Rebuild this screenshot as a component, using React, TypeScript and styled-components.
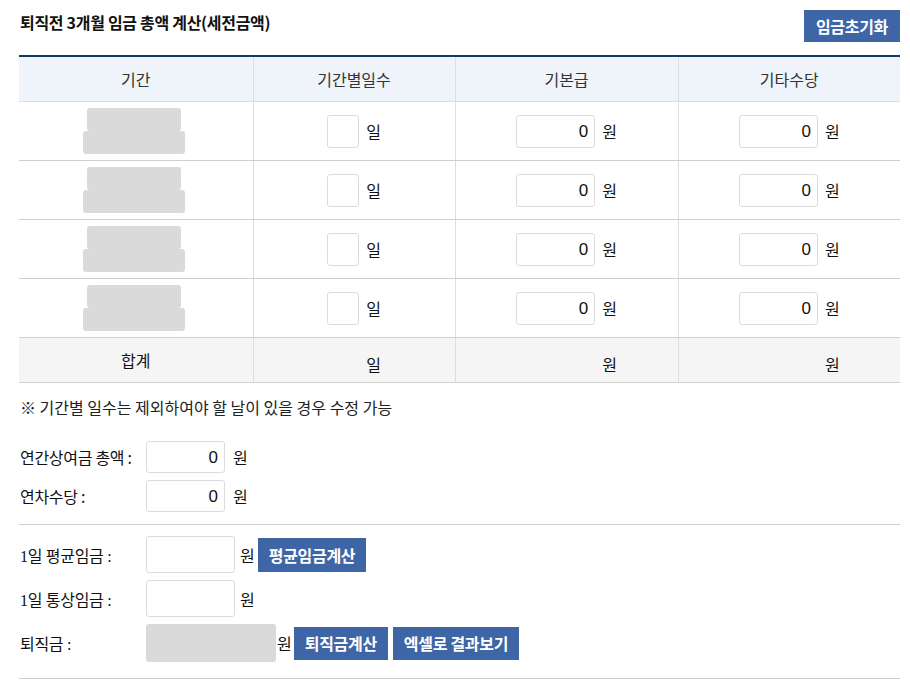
import styled, { createGlobalStyle } from 'styled-components';

const GlobalStyle = createGlobalStyle`
  body {
    margin: 0;
    background: #fff;
    font-family: "Noto Sans CJK KR", "Noto Sans", sans-serif;
    color: #222;
  }
`;

const Colors = {
  navy: '#0f3b66',
  button: '#3e66a6',
  headBg: '#eff3fa',
  totalBg: '#f5f5f5',
  line: '#cfcfcf',
  cellLine: '#dedede',
  inputLine: '#dcdcdc',
  block: '#dadada',
};

const Page = styled.div`
  width: 881px;
  padding: 0 10px 0 19px;
`;

const TitleBar = styled.div`
  height: 55px;
  display: flex;
  align-items: flex-start;
  justify-content: space-between;

  h2 {
    margin: 10px 0 0 1px;
    font-size: 16px;
    font-weight: bold;
    letter-spacing: -0.3px;
    color: #111;
  }
`;

const BlueButton = styled.button<{ $h?: number }>`
  height: ${(p) => p.$h || 34}px;
  padding: 0 11px;
  border: 0;
  background: ${Colors.button};
  color: #fff;
  font-family: "Noto Sans CJK KR", sans-serif;
  font-size: 16px;
  font-weight: bold;
  letter-spacing: -0.3px;
  cursor: pointer;
`;

const ResetButton = styled(BlueButton)`
  margin-top: 10px;
  height: 32px;
  width: 96px;
  padding: 0;
`;

const WageTable = styled.table`
  width: 881px;
  border-collapse: collapse;
  table-layout: fixed;
  border-top: 2px solid ${Colors.navy};
  font-size: 16px;

  th {
    height: 42px;
    background: ${Colors.headBg};
    font-weight: normal;
    color: #333;
    border-left: 1px solid ${Colors.cellLine};
    border-bottom: 1px solid ${Colors.cellLine};
  }
  td {
    height: 58px;
    text-align: center;
    border-left: 1px solid ${Colors.cellLine};
    border-bottom: 1px solid ${Colors.line};
    padding: 0;
  }
  th:first-child,
  td:first-child {
    border-left: 0;
  }
  tfoot td {
    height: 44px;
    background: ${Colors.totalBg};
    border-top: 1px solid ${Colors.navy};
    color: #111;
  }
`;

const PeriodBlock = styled.div`
  display: flex;
  flex-direction: column;
  align-items: center;
  margin: -1px 4px 0 0;

  span {
    display: block;
    height: 23px;
    background: ${Colors.block};
    border-radius: 3px;
  }
  span:first-child {
    width: 94px;
  }
  span:last-child {
    width: 102px;
  }
`;

const CellInner = styled.div`
  display: inline-flex;
  align-items: center;
  gap: 7px;
  color: #111;
`;

const NumInput = styled.input<{ $w: number; $h?: number }>`
  box-sizing: border-box;
  width: ${(p) => p.$w}px;
  height: ${(p) => p.$h || 33}px;
  border: 1px solid ${Colors.inputLine};
  border-radius: 3px;
  padding: 2px 6px 0;
  text-align: right;
  font-family: "Liberation Sans", Arial, sans-serif;
  font-size: 17px;
  color: #111;
  background: #fff;
  outline: none;
`;

const TotalSlot = styled.span<{ $w: number }>`
  display: inline-block;
  width: ${(p) => p.$w}px;
`;

const Note = styled.p`
  margin: 12px 0 0 1px;
  font-size: 16px;
  color: #222;
`;

const FormBlock = styled.div<{ $gap: number }>`
  display: flex;
  flex-direction: column;
  gap: ${(p) => p.$gap}px;
`;

const TopForm = styled(FormBlock)`
  margin-top: 22px;
  padding-bottom: 12px;
  border-bottom: 1px solid ${Colors.line};
`;

const BottomForm = styled(FormBlock)`
  padding: 11px 0 16px;
  border-bottom: 1px solid ${Colors.line};
`;

const FormRow = styled.div<{ $serif?: boolean }>`
  display: flex;
  align-items: center;
  font-size: 16px;
  color: #111;
  font-family: ${(p) =>
    p.$serif ? '"Liberation Serif", "Noto Sans CJK KR", serif' : '"Noto Sans CJK KR", sans-serif'};

  label {
    width: 127px;
    padding-left: 1px;
    box-sizing: border-box;
    letter-spacing: -0.3px;
  }
`;

const Unit = styled.span<{ $l: number; $r?: number }>`
  margin-left: ${(p) => p.$l}px;
  margin-right: ${(p) => p.$r || 0}px;
`;

const ResultBox = styled.div`
  width: 130px;
  height: 38px;
  background: ${Colors.block};
  border-radius: 3px;
`;

const ButtonGroup = styled.div`
  display: flex;
  gap: 5px;
`;

const columns = ['기간', '기간별일수', '기본급', '기타수당'];

const App = () => {
  const rows = [0, 1, 2, 3];
  return (
    <Page>
      <GlobalStyle />
      <TitleBar>
        <h2>퇴직전 3개월 임금 총액 계산(세전금액)</h2>
        <ResetButton>임금초기화</ResetButton>
      </TitleBar>

      <WageTable>
        <colgroup>
          <col style={{ width: 234 }} />
          <col style={{ width: 202 }} />
          <col style={{ width: 223 }} />
          <col style={{ width: 222 }} />
        </colgroup>
        <thead>
          <tr>
            {columns.map((c) => (
              <th key={c}>{c}</th>
            ))}
          </tr>
        </thead>
        <tbody>
          {rows.map((r) => (
            <tr key={r}>
              <td>
                <PeriodBlock>
                  <span />
                  <span />
                </PeriodBlock>
              </td>
              <td>
                <CellInner>
                  <NumInput $w={32} defaultValue="" />
                  <span>일</span>
                </CellInner>
              </td>
              <td>
                <CellInner>
                  <NumInput $w={79} defaultValue="0" />
                  <span>원</span>
                </CellInner>
              </td>
              <td>
                <CellInner>
                  <NumInput $w={79} defaultValue="0" />
                  <span>원</span>
                </CellInner>
              </td>
            </tr>
          ))}
        </tbody>
        <tfoot>
          <tr>
            <td>합계</td>
            <td>
              <CellInner>
                <TotalSlot $w={32} />
                <span>일</span>
              </CellInner>
            </td>
            <td>
              <CellInner>
                <TotalSlot $w={79} />
                <span>원</span>
              </CellInner>
            </td>
            <td>
              <CellInner>
                <TotalSlot $w={79} />
                <span>원</span>
              </CellInner>
            </td>
          </tr>
        </tfoot>
      </WageTable>

      <Note>※ 기간별 일수는 제외하여야 할 날이 있을 경우 수정 가능</Note>

      <TopForm $gap={7}>
        <FormRow>
          <label>연간상여금 총액 :</label>
          <NumInput $w={79} $h={32} defaultValue="0" />
          <Unit $l={8}>원</Unit>
        </FormRow>
        <FormRow>
          <label>연차수당 :</label>
          <NumInput $w={79} $h={32} defaultValue="0" />
          <Unit $l={8}>원</Unit>
        </FormRow>
      </TopForm>

      <BottomForm $gap={7}>
        <FormRow $serif>
          <label>1일 평균임금 :</label>
          <NumInput $w={89} $h={37} defaultValue="" />
          <Unit $l={5} $r={3}>원</Unit>
          <BlueButton $h={34}>평균임금계산</BlueButton>
        </FormRow>
        <FormRow $serif>
          <label>1일 통상임금 :</label>
          <NumInput $w={89} $h={37} defaultValue="" />
          <Unit $l={5}>원</Unit>
        </FormRow>
        <FormRow $serif>
          <label>퇴직금 :</label>
          <ResultBox />
          <Unit $l={1} $r={2}>원</Unit>
          <ButtonGroup>
            <BlueButton $h={33}>퇴직금계산</BlueButton>
            <BlueButton $h={33}>엑셀로 결과보기</BlueButton>
          </ButtonGroup>
        </FormRow>
      </BottomForm>
    </Page>
  );
};

export default App;
